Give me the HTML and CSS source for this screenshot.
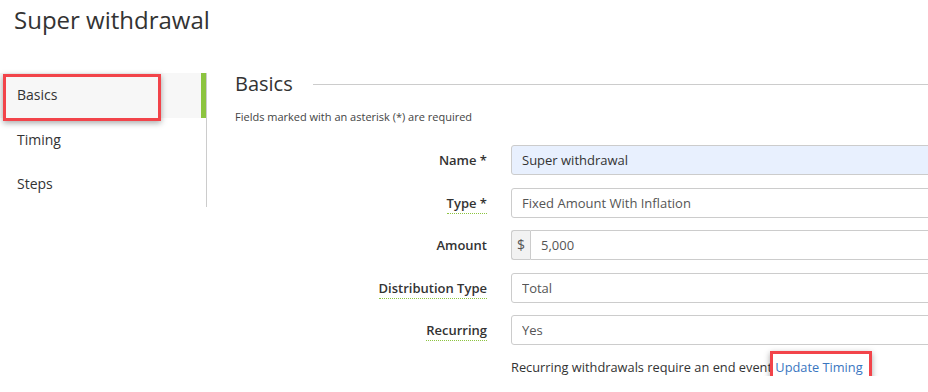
FILE: index.html
```html
<!DOCTYPE html>
<html lang="en">

<head>
    <meta charset="UTF-8">
    <meta name="viewport" content="width=device-width, initial-scale=1.0">
    <title>Super withdrawal</title>
    <link rel="stylesheet" href="styles.css">
</head>

<body>

<h1 class="page-title">Super withdrawal</h1>

<div class="layout">
    <nav class="side-nav">
        <a href="#" class="nav-item active">Basics</a>
        <a href="#" class="nav-item">Timing</a>
        <a href="#" class="nav-item">Steps</a>
    </nav>

    <section class="content">
        <div class="legend">
            <h2>Basics</h2>
            <span class="legend-line"></span>
        </div>
        <p class="note">Fields marked with an asterisk (*) are required</p>

        <form class="form-grid">
            <label class="form-label" for="name">Name *</label>
            <input class="form-input autofilled" id="name" value="Super withdrawal">

            <label class="form-label" for="type"><span class="hint">Type *</span></label>
            <select class="form-input muted" id="type">
                <option>Fixed Amount With Inflation</option>
            </select>

            <label class="form-label" for="amount">Amount</label>
            <div class="input-group">
                <span class="addon">$</span>
                <input class="form-input grouped" id="amount" value="5,000">
            </div>

            <label class="form-label" for="distribution"><span class="hint">Distribution Type</span></label>
            <select class="form-input" id="distribution">
                <option>Total</option>
            </select>

            <label class="form-label" for="recurring"><span class="hint">Recurring</span></label>
            <select class="form-input" id="recurring">
                <option>Yes</option>
            </select>

            <p class="help-text">Recurring withdrawals require an end event <a href="#">Update Timing</a></p>
        </form>
    </section>
</div>

<!-- annotation highlights from the screenshot -->
<div class="highlight nav-highlight"></div>
<div class="highlight link-highlight"></div>

</body>
</html>
```

FILE: styles.css
```css
html, body {
    overflow: hidden;
}

body {
    font-family: "Open Sans", Arial, sans-serif;
    margin: 0;
    padding: 0;
    color: #333;
    background: #fff;
    position: relative;
}

.page-title {
    margin: 0;
    padding: 5px 14px 0;
    font-size: 24px;
    font-weight: 400;
    line-height: 30px;
    color: #333;
}

.layout {
    display: flex;
    margin-top: 38px;
}

.side-nav {
    width: 206px;
    flex: none;
    border-right: 1px solid #ccc;
    display: flex;
    flex-direction: column;
    height: 134px;
}

.nav-item {
    display: block;
    height: 45px;
    line-height: 44px;
    padding-left: 17px;
    font-size: 14px;
    color: #333;
    text-decoration: none;
}

.nav-item.active {
    background-color: #f7f7f7;
    box-shadow: inset -5px 0 0 #8cc43f;
}

.content {
    flex: 1;
    padding-left: 28px;
    margin-top: -1px;
}

.legend {
    display: flex;
    align-items: center;
    height: 24px;
}

.legend h2 {
    margin: 0;
    font-size: 20px;
    font-weight: 400;
    line-height: 24px;
    color: #333;
}

.legend-line {
    flex: 1;
    height: 1px;
    background: #ccc;
    margin-left: 20px;
}

.note {
    margin: 13px 0 20px;
    font-size: 11px;
    line-height: 16px;
    color: #444;
}

.form-grid {
    display: grid;
    grid-template-columns: 252px 470px;
    column-gap: 24px;
    row-gap: 12.5px;
    align-items: center;
}

.form-label {
    text-align: right;
    font-size: 13px;
    font-weight: 600;
    color: #333;
}

.hint {
    border-bottom: 1px dotted #8cc43f;
    padding-bottom: 1px;
}

.form-input {
    box-sizing: border-box;
    height: 30px;
    width: 100%;
    padding: 0 10px;
    border: 1px solid #ccc;
    border-radius: 3px;
    font-family: inherit;
    font-size: 13px;
    color: #555;
    background: #fff;
    appearance: none;
    -webkit-appearance: none;
    outline: none;
}

.form-input.autofilled {
    background-color: #e8f0fe;
    color: #333;
}

.input-group {
    display: flex;
    height: 30px;
}

.addon {
    box-sizing: border-box;
    width: 19px;
    flex: none;
    border: 1px solid #ccc;
    border-right: none;
    border-radius: 3px 0 0 3px;
    background: #f2f2f2;
    font-size: 14px;
    color: #555;
    line-height: 28px;
    text-align: center;
}

.form-input.grouped {
    border-radius: 0 3px 3px 0;
}

.help-text {
    grid-column: 2;
    margin: 0;
    font-size: 12.8px;
    line-height: 18px;
    color: #333;
}

.help-text a {
    color: #3a76bf;
    text-decoration: none;
}

.highlight {
    position: absolute;
    box-sizing: border-box;
    border: 3px solid #f2444a;
    box-shadow: 0 2px 6px rgba(0, 0, 0, 0.35);
}

.nav-highlight {
    left: 3px;
    top: 74px;
    width: 158px;
    height: 47px;
}

.link-highlight {
    left: 770px;
    top: 351px;
    width: 102px;
    height: 34px;
}
```
